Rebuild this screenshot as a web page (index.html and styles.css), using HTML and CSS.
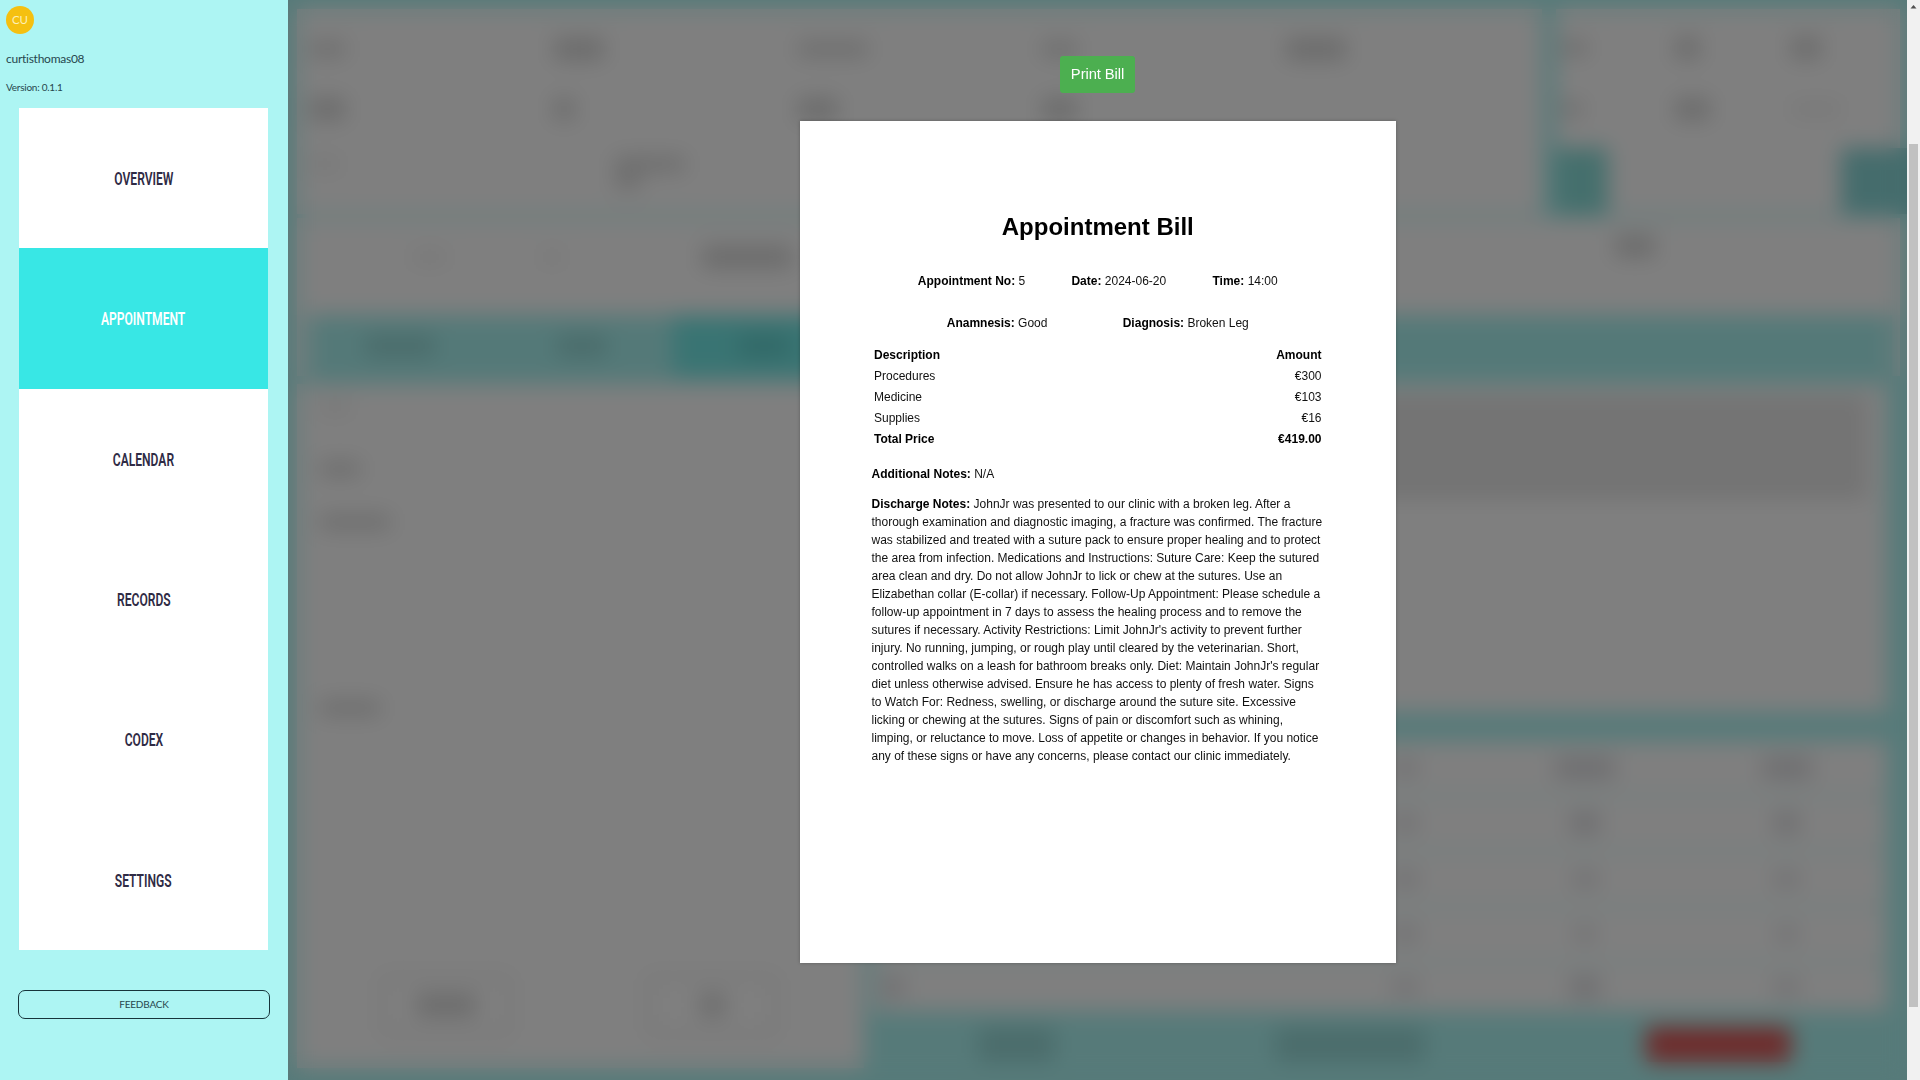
FILE: index.html
```html
<!DOCTYPE html>
<html lang="en">
<head>
<meta charset="utf-8">
<title>Appointment Bill</title>
<link rel="stylesheet" href="styles.css">
</head>
<body>
<div class="app">
  <aside class="sidebar">
    <div class="avatar">CU</div>
    <div class="username">curtisthomas08</div>
    <div class="version">Version: 0.1.1</div>
    <nav class="nav">
      <a class="nav-item"><span class="nav-label">OVERVIEW</span></a>
      <a class="nav-item active"><span class="nav-label">APPOINTMENT</span></a>
      <a class="nav-item"><span class="nav-label">CALENDAR</span></a>
      <a class="nav-item"><span class="nav-label">RECORDS</span></a>
      <a class="nav-item"><span class="nav-label">CODEX</span></a>
      <a class="nav-item"><span class="nav-label">SETTINGS</span></a>
    </nav>
    <button class="feedback"><span>FEEDBACK</span></button>
  </aside>

  <main class="main">
    <div class="page">
      <div class="top">
        <section class="card info">
          <div class="info-row">
            <i class="bar w35"></i><i class="bar w50 tall"></i><i class="bar w70"></i><i class="bar w35"></i><i class="bar w60 tall"></i>
          </div>
          <div class="info-row">
            <i class="bar w35 tall"></i><i class="bar w20 tall"></i><i class="bar w40 tall"></i><i class="bar w35 tall"></i>
          </div>
          <div class="info-foot"><i class="bar w30 faint"></i><span class="stack"><i class="bar w70"></i><i class="bar w25"></i></span></div>
        </section>
        <section class="card owner">
          <div class="owner-row"><i class="bar w25"></i><i class="bar w25 tall"></i><i class="bar w30 tall"></i></div>
          <div class="owner-row"><i class="bar w20"></i><i class="bar w35 tall"></i><i class="bar w50 faint"></i></div>
          <div class="owner-actions"><b class="square"></b><b class="square wide"></b></div>
        </section>
      </div>

      <section class="card summary">
        <i class="bar w35 faint"></i><i class="bar w20 faint"></i><i class="bar w90 tall"></i><i class="bar w40 tall end"></i>
      </section>

      <section class="lower">
        <div class="tabs">
          <div class="tab"><i class="bar w70 tall"></i></div>
          <div class="tab"><i class="bar w50 tall"></i></div>
          <div class="tab current"><i class="bar w50 tall"></i></div>
        </div>
        <div class="columns">
          <div class="card form">
            <i class="bar w30 faint"></i>
            <i class="bar w40"></i>
            <i class="bar w70"></i>
            <i class="bar w60 second"></i>
            <div class="form-buttons">
              <div class="outline"><i class="bar w60 tall"></i></div>
              <div class="outline"><i class="bar w25 tall"></i></div>
            </div>
          </div>
          <div class="right">
            <div class="card notes">
              <i class="line"></i><i class="line"></i><i class="line"></i><i class="line"></i><i class="line"></i>
            </div>
            <div class="table">
              <div class="row"><i class="bar w30"></i><i class="bar w25"></i><i class="bar w60 tall"></i><i class="bar w50 tall"></i></div>
              <div class="row"><i class="bar w30"></i><i class="bar w25"></i><i class="bar w30 tall"></i><i class="bar w25 tall"></i></div>
              <div class="row"><i class="bar w30"></i><i class="bar w25"></i><i class="bar w25"></i><i class="bar w25"></i></div>
              <div class="row"><i class="bar w30"></i><i class="bar w25"></i><i class="bar w20"></i><i class="bar w20"></i></div>
              <div class="row"><i class="bar w20 tall"></i><i class="bar w25"></i><i class="bar w30 tall"></i><i class="bar w25"></i></div>
            </div>
            <div class="actions"><b class="btn small"></b><b class="btn medium"></b><b class="btn danger"></b></div>
          </div>
        </div>
      </section>
    </div>

    <div class="overlay">
      <button class="print">Print Bill</button>
      <article class="paper">
        <h1>Appointment Bill</h1>
        <div class="facts">
          <p><strong>Appointment No:</strong> 5</p>
          <p><strong>Date:</strong> 2024-06-20</p>
          <p><strong>Time:</strong> 14:00</p>
        </div>
        <div class="facts">
          <p><strong>Anamnesis:</strong> Good</p>
          <p><strong>Diagnosis:</strong> Broken Leg</p>
        </div>
        <div class="costs">
          <div class="cost bold"><span>Description</span><span>Amount</span></div>
          <div class="cost"><span>Procedures</span><span>€300</span></div>
          <div class="cost"><span>Medicine</span><span>€103</span></div>
          <div class="cost"><span>Supplies</span><span>€16</span></div>
          <div class="cost bold"><span>Total Price</span><span>€419.00</span></div>
        </div>
        <p class="note"><strong>Additional Notes:</strong> N/A</p>
        <p class="note"><strong>Discharge Notes:</strong> JohnJr was presented to our clinic with a broken leg. After a<br>
          thorough examination and diagnostic imaging, a fracture was confirmed. The fracture<br>
          was stabilized and treated with a suture pack to ensure proper healing and to protect<br>
          the area from infection. Medications and Instructions: Suture Care: Keep the sutured<br>
          area clean and dry. Do not allow JohnJr to lick or chew at the sutures. Use an<br>
          Elizabethan collar (E-collar) if necessary. Follow-Up Appointment: Please schedule a<br>
          follow-up appointment in 7 days to assess the healing process and to remove the<br>
          sutures if necessary. Activity Restrictions: Limit JohnJr's activity to prevent further<br>
          injury. No running, jumping, or rough play until cleared by the veterinarian. Short,<br>
          controlled walks on a leash for bathroom breaks only. Diet: Maintain JohnJr's regular<br>
          diet unless otherwise advised. Ensure he has access to plenty of fresh water. Signs<br>
          to Watch For: Redness, swelling, or discharge around the suture site. Excessive<br>
          licking or chewing at the sutures. Signs of pain or discomfort such as whining,<br>
          limping, or reluctance to move. Loss of appetite or changes in behavior. If you notice<br>
          any of these signs or have any concerns, please contact our clinic immediately.</p>
      </article>
    </div>
  </main>

  <div class="scrollbar">
    <svg class="arrow" width="7" height="4" viewBox="0 0 7 4"><path d="M3.5 0 6.5 3.5H.5Z" fill="#505050"/></svg>
    <div class="thumb"></div>
  </div>
</div>
</body>
</html>
```
FILE: styles.css
```css
* { box-sizing: border-box; }
body { margin: 0; font-family: "Liberation Sans", Arial, sans-serif; }
p, h1 { margin: 0; }
button { font: inherit; }

.app { display: flex; width: 1920px; height: 1080px; overflow: hidden; background: #adf5f3; }

/* Sidebar */
.sidebar {
  width: 288px; flex: none; background: #adf5f3; padding: 6px 0 0;
  font-family: Lato, sans-serif; color: #27474e;
}
.avatar {
  width: 28px; height: 28px; margin-left: 6px; border-radius: 50%; background: #f5c010;
  color: #fdf0b8; font-size: 11.5px; line-height: 28px; text-align: center;
}
.username { margin: 15px 0 0 6px; font-size: 12px; line-height: 20px; letter-spacing: -.26px; }
.version { margin: 10px 0 0 6px; font-size: 10px; line-height: 16px; letter-spacing: -.25px; }
.nav { margin: 13px 0 0 19px; width: 249px; height: 842px; display: flex; flex-direction: column; background: #fff; }
.nav-item { flex: 1; display: flex; align-items: center; justify-content: center; padding-top: 2px; color: #2f2b45; }
.nav-item.active { background: #38e7e5; color: #fff; }
.nav-label { font: 600 17.5px/24px Roboto, sans-serif; transform: scaleX(.69); }
.feedback {
  display: flex; align-items: center; justify-content: center; margin: 40px 0 0 18px;
  width: 252px; height: 29px; padding: 0 0 2px; border: 1px solid #16343a; border-radius: 7px;
  background: none; color: #27474e; font-size: 10px; letter-spacing: -.2px;
}

/* Page behind the dialog */
.main { position: relative; width: 1619px; flex: none; overflow: hidden; background: #adf5f3; }
.page { display: flex; flex-direction: column; height: 1080px; padding: 9px 7px 12px 9px; }
.card { background: #fff; }
.bar { display: block; height: 14px; background: #d6d6d6; }
.tall { height: 22px; }
.faint { background: #f0f0f0; }
.w20 { width: 20px; } .w25 { width: 25px; } .w30 { width: 30px; } .w35 { width: 35px; }
.w40 { width: 40px; } .w50 { width: 50px; } .w60 { width: 60px; } .w70 { width: 70px; } .w90 { width: 90px; }

.top { display: flex; gap: 14px; height: 205px; }
.info { width: 1245px; padding: 10px 0 0 13px; }
.info-row { display: grid; grid-template-columns: repeat(5, 244px); height: 60px; align-items: center; }
.info-foot { display: flex; gap: 275px; padding-top: 18px; }
.stack .bar + .bar { margin-top: 3px; }
.owner { flex: 1; display: flex; flex-direction: column; padding-top: 8px; }
.owner-row { display: grid; grid-template-columns: 113px 116px 1fr; padding-left: 6px; height: 61px; align-items: center; }
.owner-actions { flex: 1; display: flex; justify-content: space-between; padding-top: 9px; margin-right: -7px; }
.square { width: 52px; background: #8adfda; }
.square.wide { width: 66px; background: #8ad9d9; }

.summary { display: flex; align-items: center; height: 98px; margin-top: 4px; padding: 0 245px 20px 115px; }
.summary .bar + .bar { margin-left: 95px; }
.summary .bar + .bar.w90 { margin-left: 140px; }
.summary .bar.end { margin-left: auto; margin-bottom: 22px; }

.lower { flex: 1; display: flex; flex-direction: column; margin-top: -1px; background: #adf5f3; }
.tabs { display: flex; height: 61px; border: solid #f4ffff; border-width: 0 8px 0 12px; background: #a9f3f1; }
.tab { width: 182px; display: flex; align-items: center; justify-content: center; }
.tab .bar { background: #95d8d6; }
.tab.current { background: #73e9e6; }
.tab.current .bar { background: #64d1ce; }
.columns { flex: 1; display: flex; gap: 9px; margin-top: 8px; }
.form { width: 567px; flex: none; padding: 16px 20px 0 23px; }
.form .bar + .bar { margin-top: 48px; }
.form > .bar:nth-child(3) { margin-top: 39px; }
.form > .bar.second { margin-top: 172px; }
.form-buttons { display: flex; gap: 134px; margin: 259px 0 0 60px; }
.outline { width: 132px; height: 62px; border: 4px solid #e4e4e4; border-radius: 8px; display: flex; align-items: center; justify-content: center; }

.right { flex: 1; min-width: 0; display: flex; flex-direction: column; padding-right: 13px; }
.notes { height: 328px; padding: 15px 20px; }
.line { display: block; height: 13px; margin-bottom: 8px; background: #dadada; }
.table { display: flex; flex-direction: column; gap: 2px; margin-top: 29px; }
.row { display: grid; grid-template-columns: 510px 91px 202px 201px; align-items: center; height: 53.5px; padding-left: 10px; background: #fff; }
.row:last-child { height: 48px; }
.row .bar { background: #dcdce0; }
.row .bar:nth-child(n+3) { justify-self: center; }
.actions { display: flex; margin-top: 16px; padding-left: 105px; }
.btn { flex: none; height: 35px; background: #97d9d7; }
.btn.small { width: 77px; }
.btn.medium { width: 150px; margin-left: 220px; }
.btn.danger { width: 145px; margin-left: 221px; border-radius: 4px; background: #dd5555; }

/* Bill dialog */
.overlay {
  position: absolute; inset: 0; display: flex; flex-direction: column; align-items: center;
  padding-top: 56px; background: rgba(0, 0, 0, .5); backdrop-filter: blur(11px);
}
.print { width: 75px; height: 37px; padding: 0 0 1px; border: 0; border-radius: 3px; background: #4caf50; color: #fff; font-size: 14.8px; line-height: 1; letter-spacing: -.1px; }
.paper {
  width: 596px; height: 842px; margin-top: 28px; padding: 87px 71.5px 0 72px; background: #fff;
  box-shadow: 0 0 4px rgba(0, 0, 0, .25); font-size: 12px; line-height: 18px; color: #111;
}
.paper h1 { font-size: 24px; line-height: 38px; text-align: center; color: #000; margin-bottom: 26px; }
.facts { display: flex; justify-content: space-evenly; margin-bottom: 24px; }
.facts + .costs { margin-top: -11px; }
.cost { display: flex; justify-content: space-between; padding: 1px 2.5px 2px; }
.bold, strong { font-weight: 700; color: #000; }
.note { margin-top: 15px; white-space: nowrap; }
.note + .note { margin-top: 12px; }

/* Browser scrollbar */
.scrollbar { flex: 1; padding: 5px 2px 0; background: #f1f1f1; }
.arrow { display: block; margin: 0 auto; }
.thumb { height: 863px; margin-top: 135px; background: #c1c1c1; }
```
